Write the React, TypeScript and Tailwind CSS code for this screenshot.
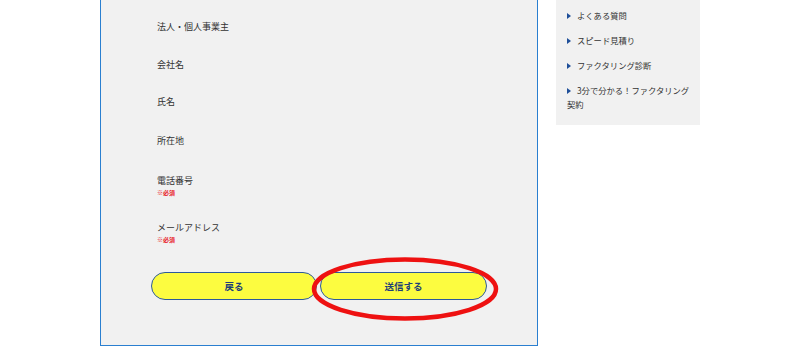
import React from "react";

const font = { fontFamily: '"Noto Sans CJK JP", "Noto Sans", sans-serif' };

function Field({ label, required, mt }: { label: string; required?: boolean; mt: string }) {
  return (
    <div className={`${mt} flex flex-col`}>
      <div className="text-[9px] leading-[12px] text-[#333333]">{label}</div>
      {required && (
        <div className="mt-[2px] text-[6px] leading-[8px] font-bold text-[#e8202a]">※必須</div>
      )}
    </div>
  );
}

export default function App() {
  const links: string[] = ["よくある質問", "スピード見積り", "ファクタリング診断", "3分で分かる！ファクタリング契約"];
  return (
    <div className="w-[800px] h-[350px] bg-white overflow-hidden" style={font}>
      <div className="flex items-start pl-[100px] gap-[18px]">
        <div className="relative w-[438px] h-[346px] border-x-[1.5px] border-b-[1.5px] border-[#2a7fd0] bg-[#f1f1f1] flex flex-col">
          <div className="pl-[56px] flex flex-col">
            <Field mt="mt-[21px]" label="法人・個人事業主" />
            <Field mt="mt-[26px]" label="会社名" />
            <Field mt="mt-[25px]" label="氏名" />
            <Field mt="mt-[27px]" label="所在地" />
            <Field mt="mt-[28px]" label="電話番号" required />
            <Field mt="mt-[25px]" label="メールアドレス" required />
          </div>
          <div className="mt-[28px] flex justify-center gap-[3px]">
            <button className="w-[166px] h-[28px] rounded-full border-[1.5px] border-[#2d5a9c] bg-[#fcfc40] text-[9.5px] font-bold text-[#1f3f78]">
              戻る
            </button>
            <button className="w-[167px] h-[28px] rounded-full border-[1.5px] border-[#2d5a9c] bg-[#fcfc40] text-[9.5px] font-bold text-[#1f3f78]">
              送信する
            </button>
          </div>
          <svg
            className="absolute left-[210px] top-[256px] pointer-events-none"
            width="190"
            height="66"
            viewBox="0 0 190 66"
          >
            <ellipse cx="94" cy="33" rx="91" ry="29.5" fill="none" stroke="#ee1111" strokeWidth="4.5" />
          </svg>
        </div>
        <div className="w-[144px] bg-[#f1f1f1] pt-[8px] pb-[14px] pl-[11px] pr-[8px] flex flex-col gap-[11px]">
          {links.map((t) => (
            <div key={t} className="text-[8.3px] leading-[14px] text-[#333333]">
              <span className="inline-block align-middle mr-[6px] mb-[2px] w-0 h-0 border-y-[3px] border-y-transparent border-l-[4px] border-l-[#1f4f99]" />
              {t}
            </div>
          ))}
        </div>
      </div>
    </div>
  );
}
